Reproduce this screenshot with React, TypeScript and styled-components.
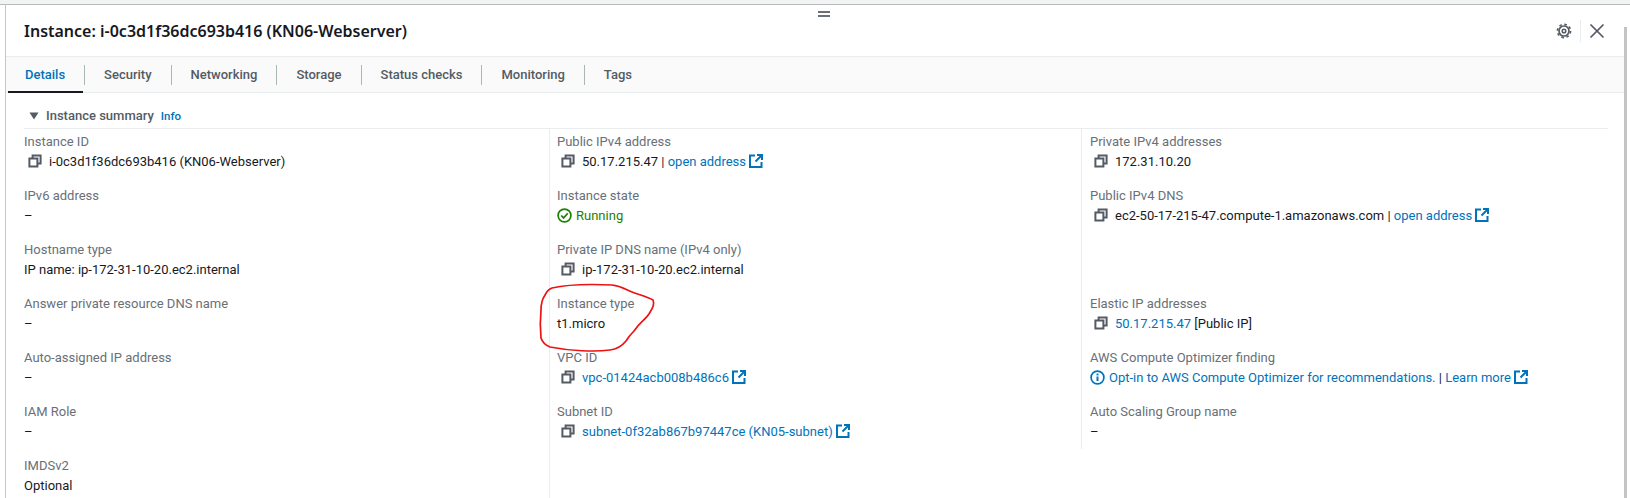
import React from "react";
import styled, { createGlobalStyle } from "styled-components";
import { X } from "lucide-react";

const GlobalStyle = createGlobalStyle`
  html, body {
    margin: 0;
    padding: 0;
    background: #fff;
  }
  body {
    font-family: Roboto, "Liberation Sans", sans-serif;
    font-size: 13px;
    color: #16191f;
  }
`;

const Page = styled.div`
  position: relative;
  width: 1630px;
  height: 498px;
  overflow: hidden;
  background: #fff;
`;

const TopStrip = styled.div`
  height: 4px;
  background: #f2f3f3;
  border-bottom: 1px solid #b4bdbd;
`;

const Panel = styled.div`
  position: relative;
  margin-left: 5px;
  margin-right: 3px;
  height: 493px;
  border-left: 1px solid #c2c8c8;
  display: flex;
  flex-direction: column;
`;

const ScrollThumb = styled.div`
  position: absolute;
  right: 0;
  top: 22px;
  bottom: 0;
  width: 3px;
  background: #c4c4c4;
`;

const DragHandle = styled.div`
  position: absolute;
  top: 6px;
  left: 812px;
  width: 12px;
  height: 2px;
  border-top: 2px solid #687078;
  border-bottom: 2px solid #687078;
`;

const Header = styled.header`
  height: 51px;
  display: flex;
  align-items: center;
  justify-content: space-between;
  padding: 0 18px 0 18px;
  border-bottom: 1px solid #eaeded;
`;

const Title = styled.h1`
  margin: 0;
  font-family: "Noto Sans", sans-serif;
  font-size: 16px;
  font-weight: 600;
  color: #16191f;
`;

const HeaderActions = styled.div`
  display: flex;
  align-items: center;
  color: #545b64;
`;

const ActionDivider = styled.span`
  width: 1px;
  height: 22px;
  margin: 0 4px 0 8px;
  background: #eaeded;
`;

const TabBar = styled.nav`
  height: 35px;
  display: flex;
  align-items: center;
  background: #fafafa;
  border-bottom: 1px solid #eaeded;
`;

const Tab = styled.div<{ $active?: boolean }>`
  position: relative;
  height: 20px;
  line-height: 20px;
  padding: 0 19px;
  font-size: 13px;
  font-weight: 500;
  color: ${(props) => (props.$active ? "#0073bb" : "#545b64")};
  & + & {
    border-left: 1px solid #aab7b8;
  }
  ${(props) =>
    props.$active &&
    `
    &::after {
      content: "";
      position: absolute;
      left: 2px;
      right: 1px;
      bottom: -8px;
      height: 2px;
      background: #16191f;
    }
  `}
`;

const SectionHeading = styled.div`
  height: 36px;
  margin: 0 19px 0 18px;
  box-sizing: border-box;
  padding: 10px 0 0 5px;
  display: flex;
  align-items: center;
  gap: 7px;
  border-bottom: 1px solid #eaeded;
`;

const SectionTitle = styled.span`
  font-size: 13px;
  font-weight: 500;
  color: #545b64;
`;

const InfoLink = styled.span`
  font-size: 11.5px;
  font-weight: 500;
  color: #0073bb;
`;

const Columns = styled.div`
  flex: 1;
  display: grid;
  grid-template-columns: 526px 532px 526px;
  margin-left: 18px;
  min-height: 0;
`;

const Column = styled.div<{ $length: number; $inset: number; $last?: boolean }>`
  align-self: start;
  box-sizing: border-box;
  height: ${(props) => (props.$length === 7 ? "370px" : "320px")};
  padding-left: ${(props) => props.$inset}px;
  border-right: ${(props) => (props.$last ? "none" : "1px solid #eaeded")};
`;

const Field = styled.div`
  height: 54px;
  padding-top: 3px;
  box-sizing: border-box;
`;

const Label = styled.div`
  line-height: 20px;
  color: #687078;
`;

const Value = styled.div<{ $tone?: "link" | "success" }>`
  display: flex;
  align-items: center;
  height: 20px;
  margin-top: -1px;
  white-space: pre;
  color: ${(props) =>
    props.$tone === "link"
      ? "#0073bb"
      : props.$tone === "success"
        ? "#1d8102"
        : "#16191f"};
`;

const Copyable = styled.span`
  display: inline-flex;
  align-items: center;
  color: #545b64;
  margin: 0 7px 0 4px;
`;

const StatusGlyph = styled.span`
  display: inline-flex;
  margin-right: 4px;
`;

const ExternalGlyph = styled.span`
  display: inline-flex;
  margin-left: 3px;
`;

const LinkText = styled.span`
  color: #0073bb;
`;

const PlainText = styled.span`
  color: #16191f;
`;

const Scribble = styled.svg`
  position: absolute;
  left: 0;
  top: 0;
  pointer-events: none;
`;

const CopyIcon = () => (
  <Copyable>
    <svg width="14" height="14" viewBox="0 0 14 14" fill="none" stroke="currentColor" strokeWidth="2">
      <path d="M1.4 4.6h8v8h-8z" />
      <path d="M4.6 4V1.4h8v8H10" />
    </svg>
  </Copyable>
);

const ExternalIcon = () => (
  <ExternalGlyph>
    <svg width="14" height="14" viewBox="0 0 14 14" fill="none" stroke="#0073bb" strokeWidth="2">
      <path d="M6 1.5H1v11.5h11.5V8" />
      <path d="M8 1h5v5" />
      <path d="M12.5 1.5 6.5 7.5" />
    </svg>
  </ExternalGlyph>
);

const SuccessIcon = () => (
  <StatusGlyph>
    <svg width="15" height="15" viewBox="0 0 15 15" fill="none" stroke="#1d8102" strokeWidth="1.7">
      <circle cx="7.5" cy="7.5" r="6.4" />
      <path d="M4.2 7.5l2.4 2.4 4.2-4.6" />
    </svg>
  </StatusGlyph>
);

const InfoIcon = () => (
  <StatusGlyph>
    <svg width="15" height="15" viewBox="0 0 15 15" fill="none" stroke="#0073bb" strokeWidth="1.7">
      <circle cx="7.5" cy="7.5" r="6.4" />
      <path d="M7.5 6.5v4.5" strokeWidth="2" />
      <path d="M7.5 3.6v1.8" strokeWidth="2" />
    </svg>
  </StatusGlyph>
);

const GearIcon = () => (
  <svg width="16" height="16" viewBox="0 0 16 16" fill="none" stroke="currentColor">
    <circle cx="8" cy="8" r="5" strokeWidth="1.7" />
    <circle cx="8" cy="8" r="6.6" strokeWidth="1.6" strokeDasharray="2.6 2.6" />
    <circle cx="8" cy="8" r="1.8" strokeWidth="1.5" />
  </svg>
);

const Caret = () => (
  <svg width="10" height="8" viewBox="0 0 10 8" fill="#545b64">
    <path d="M0.5 0.5h9L5 7.5z" />
  </svg>
);

type Item = { label: string; value: React.ReactNode };

const dash = <Value>–</Value>;

const leftColumn: Item[] = [
  { label: "Instance ID", value: <Value><CopyIcon />i-0c3d1f36dc693b416 (KN06-Webserver)</Value> },
  { label: "IPv6 address", value: dash },
  { label: "Hostname type", value: <Value>IP name: ip-172-31-10-20.ec2.internal</Value> },
  { label: "Answer private resource DNS name", value: dash },
  { label: "Auto-assigned IP address", value: dash },
  { label: "IAM Role", value: dash },
  { label: "IMDSv2", value: <Value>Optional</Value> },
];

const middleColumn: Item[] = [
  {
    label: "Public IPv4 address",
    value: <Value><CopyIcon /><span>50.17.215.47 | <LinkText>open address</LinkText></span><ExternalIcon /></Value>,
  },
  { label: "Instance state", value: <Value $tone="success"><SuccessIcon />Running</Value> },
  { label: "Private IP DNS name (IPv4 only)", value: <Value><CopyIcon />ip-172-31-10-20.ec2.internal</Value> },
  { label: "Instance type", value: <Value>t1.micro</Value> },
  { label: "VPC ID", value: <Value $tone="link"><CopyIcon />vpc-01424acb008b486c6<ExternalIcon /></Value> },
  { label: "Subnet ID", value: <Value $tone="link"><CopyIcon />subnet-0f32ab867b97447ce (KN05-subnet)<ExternalIcon /></Value> },
];

const rightColumn: Item[] = [
  { label: "Private IPv4 addresses", value: <Value><CopyIcon />172.31.10.20</Value> },
  {
    label: "Public IPv4 DNS",
    value: <Value><CopyIcon /><span>ec2-50-17-215-47.compute-1.amazonaws.com | <LinkText>open address</LinkText></span><ExternalIcon /></Value>,
  },
  { label: "", value: null },
  { label: "Elastic IP addresses", value: <Value><CopyIcon /><span><LinkText>50.17.215.47</LinkText> [Public IP]</span></Value> },
  {
    label: "AWS Compute Optimizer finding",
    value: <Value $tone="link"><InfoIcon /><span>Opt-in to AWS Compute Optimizer for recommendations. <PlainText>|</PlainText> Learn more</span><ExternalIcon /></Value>,
  },
  { label: "Auto Scaling Group name", value: dash },
];

const tabs = ["Details", "Security", "Networking", "Storage", "Status checks", "Monitoring", "Tags"];
const insets = [0, 7, 8];

const App = () => {
  return (
    <Page>
      <GlobalStyle />
      <TopStrip />
      <Panel>
        <DragHandle />
        <ScrollThumb />
        <Header>
          <Title>Instance: i-0c3d1f36dc693b416 (KN06-Webserver)</Title>
          <HeaderActions>
            <GearIcon />
            <ActionDivider />
            <X size={24} strokeWidth={1.7} />
          </HeaderActions>
        </Header>
        <TabBar>
          {tabs.map((tab, i) => (
            <Tab key={tab} $active={i === 0}>{tab}</Tab>
          ))}
        </TabBar>
        <SectionHeading>
          <Caret />
          <SectionTitle>Instance summary</SectionTitle>
          <InfoLink>Info</InfoLink>
        </SectionHeading>
        <Columns>
          {[leftColumn, middleColumn, rightColumn].map((items, i) => (
            <Column key={i} $length={items.length} $inset={insets[i]} $last={i === 2}>
              {items.map((item, j) => (
                <Field key={j}>
                  <Label>{item.label}</Label>
                  {item.value}
                </Field>
              ))}
            </Column>
          ))}
        </Columns>
      </Panel>
      <Scribble width="1630" height="498" viewBox="0 0 1630 498" fill="none">
        <path
          d="M552 288C565 285 590 284 612 285C622 286 626 290 632 292C640 295 648 297 653 300C655 305 652 309 649 314C645 320 640 322 634 331C631 334 629 336 626 341C622 346 618 349 610 350C595 352 570 351 550 347C545 345 542 341 541 338C540 328 540 320 541 310C541 304 543 298 545 295C547 291 549 289 552 288Z"
          stroke="#ee1111"
          strokeWidth="1.7"
        />
      </Scribble>
    </Page>
  );
};

export default App;
